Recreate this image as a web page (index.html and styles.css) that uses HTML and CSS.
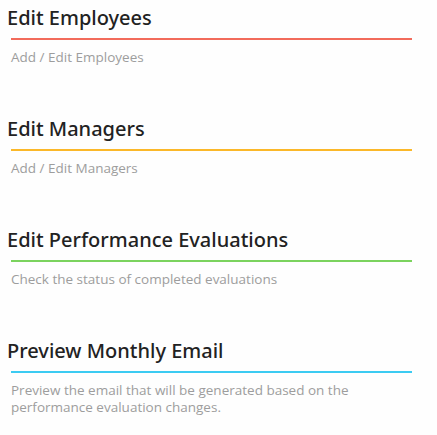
FILE: index.html
```html
<!DOCTYPE html>
<html>
<head>
<meta charset="utf-8">
<link rel="stylesheet" href="styles.css">
</head>
<body>
<div class="list">
  <section class="item">
    <h2 class="title">Edit Employees</h2>
    <div class="rule rule-red"></div>
    <p class="desc">Add / Edit Employees</p>
  </section>
  <section class="item">
    <h2 class="title">Edit Managers</h2>
    <div class="rule rule-yellow"></div>
    <p class="desc">Add / Edit Managers</p>
  </section>
  <section class="item">
    <h2 class="title">Edit Performance Evaluations</h2>
    <div class="rule rule-green"></div>
    <p class="desc">Check the status of completed evaluations</p>
  </section>
  <section class="item">
    <h2 class="title">Preview Monthly Email</h2>
    <div class="rule rule-blue"></div>
    <p class="desc">Preview the email that will be generated based on the performance evaluation changes.</p>
  </section>
</div>
</body>
</html>
```
FILE: styles.css
```css
html, body {
  margin: 0;
  padding: 0;
  background: #fefefe;
}
body {
  font-family: "Open Sans", "Noto Sans", sans-serif;
}
.list {
  display: flex;
  flex-direction: column;
  padding: 4px 0 0 7px;
}
.item {
  height: 111px;
  display: flex;
  flex-direction: column;
}
.title {
  margin: 0;
  font-family: "Noto Sans", "Open Sans", sans-serif;
  font-size: 20px;
  font-weight: 500;
  line-height: 28px;
  color: #222;
}
.rule {
  margin: 6px 0 0 4px;
  width: 401px;
  height: 2px;
}
.rule-red { background: #f26b5b; }
.rule-yellow { background: #fbb829; }
.rule-green { background: #7bd35e; }
.rule-blue { background: #3ccbf2; }
.desc {
  margin: 9px 0 0 4px;
  width: 350px;
  font-size: 13.5px;
  line-height: 17px;
  color: #9d9d9d;
}
```
